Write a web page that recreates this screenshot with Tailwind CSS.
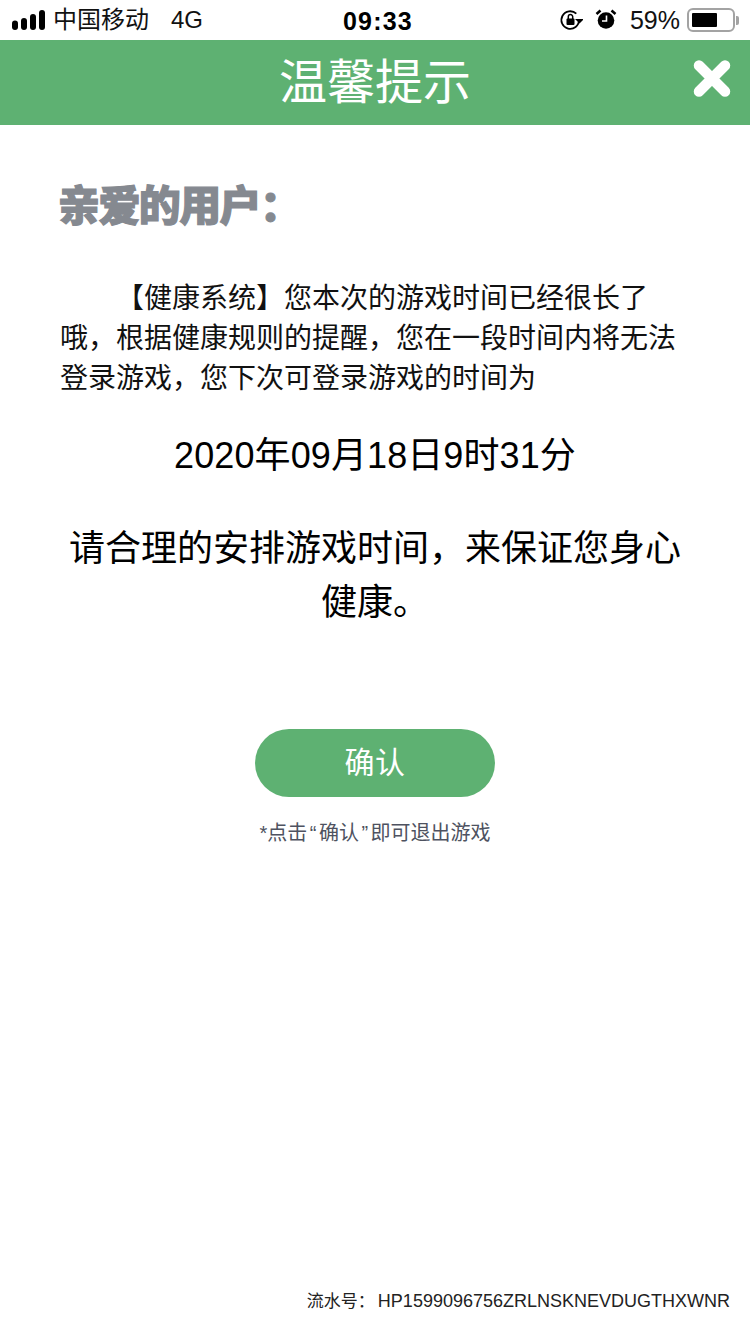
<!DOCTYPE html>
<html lang="zh-CN">
<head>
<meta charset="utf-8">
<script src="https://cdn.jsdelivr.net/npm/@tailwindcss/browser@4"></script>
<title>温馨提示</title>
</head>
<body class="bg-white">
<div class="w-[750px] h-[1334px] overflow-hidden flex flex-col bg-white text-black font-['Liberation_Sans','Noto_Sans_CJK_SC',sans-serif]">
  <!-- status bar -->
  <div class="h-10 flex items-center justify-between relative shrink-0">
    <div class="flex items-center pl-3">
      <svg width="33" height="20" viewBox="0 0 33 20" fill="#000"><rect x="0" y="10.500" width="6" height="9.500" rx="3"/><rect x="9" y="8" width="6" height="12" rx="3"/><rect x="18" y="4" width="6" height="16" rx="3"/><rect x="27" y="0" width="6" height="20" rx="3"/></svg>
      <span class="ml-[8px] text-[24px] leading-none text-[#111]">中国移动</span>
      <span class="ml-[22px] text-[24px] leading-none text-[#111]">4G</span>
    </div>
    <div class="absolute left-[343px] top-[7px] text-[25px] leading-[28px] font-bold tracking-[1.200px]">09:33</div>
    <div class="flex items-center pr-[11px]">
      <svg width="24" height="24" viewBox="0 0 24 24"><path d="M20 12a8.800 8.800 0 1 1-2.700-6.300" fill="none" stroke="#000" stroke-width="1.800"/><path d="M20.500 15.500 16 11h9z" fill="#000"/><rect x="7.500" y="10.500" width="8" height="6.500" rx="1" fill="#000"/><path d="M9.300 11V8.800a2.200 2.200 0 0 1 4.400 0V11" fill="none" stroke="#000" stroke-width="1.500"/></svg>
      <svg class="ml-[12px]" width="22" height="22" viewBox="0 0 22 22"><circle cx="11" cy="11.500" r="8.300" fill="#000"/><path d="M11.500 6.500v5.500H7" fill="none" stroke="#fff" stroke-width="1.600"/><path d="M1.500 5 5.500 1.500M20.500 5 16.500 1.500" stroke="#000" stroke-width="2.600"/></svg>
      <span class="ml-[13px] text-[25px] leading-none text-[#111]">59%</span>
      <div class="ml-[7px] w-[48px] h-[24px] rounded-[6px] border-2 border-[#a3a3a3] p-[3px] flex">
        <div class="w-[25px] bg-black rounded-[1px]"></div>
      </div>
      <div class="ml-[1px] w-[3px] h-[9px] rounded-r-[2px] bg-[#a3a3a3]"></div>
    </div>
  </div>
  <!-- header -->
  <div class="h-[85px] shrink-0 bg-[#5eb172] relative flex items-center justify-center">
    <span class="text-[48px] leading-none text-white">温馨提示</span>
    <svg class="absolute right-[19px] top-[20px]" width="38" height="37" viewBox="0 0 38 37"><path d="M6 5.500 32 31.500M32 5.500 6 31.500" stroke="#fff" stroke-width="10.500" stroke-linecap="round"/></svg>
  </div>
  <!-- main -->
  <div class="flex-1 flex flex-col px-[60px]">
    <div class="mt-[52px] -ml-[2px] h-[60px] flex items-center text-[42px] leading-[60px] font-black text-[#858990] tracking-[-1.600px] [-webkit-text-stroke:1.200px_#858990]">亲爱的用户：</div>
    <p class="mt-[42px] w-[630px] text-[28px] leading-[40px] indent-[56px] text-[#111]">【健康系统】您本次的游戏时间已经很长了哦，根据健康规则的提醒，您在一段时间内将无法登录游戏，您下次可登录游戏的时间为</p>
    <p class="mt-[32px] text-center text-[36px] leading-[50px] tracking-[0.100px]">2020年09月18日9时31分</p>
    <p class="mt-[41px] text-center text-[36px] leading-[54px]">请合理的安排游戏时间，来保证您身心健康。</p>
    <div class="mt-[99px] flex flex-col items-center">
      <button class="w-[240px] h-[68px] rounded-full bg-[#5eb172] text-white text-[30px] leading-none tracking-[0.5px]">确认</button>
      <p class="mt-[22px] text-[20px] leading-[28px] text-[#4e5260]">*点击<span class="px-[2.500px]">“</span>确认<span class="px-[2.500px]">”</span>即可退出游戏</p>
    </div>
  </div>
  <!-- serial -->
  <div class="h-[45px] shrink-0 pr-5 text-right text-[18px] leading-[24px] text-[#222]"><span class="text-[17px] mr-[-2px]">流水号：</span> HP1599096756ZRLNSKNEVDUGTHXWNR</div>
</div>
</body>
</html>
